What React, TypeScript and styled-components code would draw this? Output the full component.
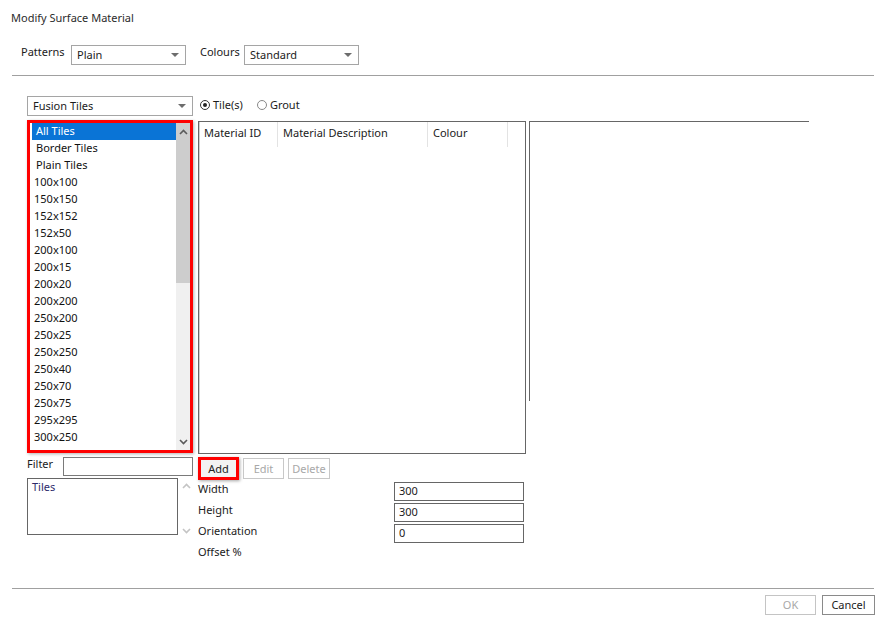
import styled, { createGlobalStyle } from 'styled-components';

const GlobalStyle = createGlobalStyle`
  html, body {
    margin: 0;
    padding: 0;
    background: #fff;
  }
  body {
    font-family: 'Noto Sans', 'Open Sans', sans-serif;
    font-size: 11px;
    color: #1b1b1b;
  }
`;

const tileSizes = [
  '100x100', '150x150', '152x152', '152x50', '200x100', '200x15', '200x20',
  '200x200', '250x200', '250x25', '250x250', '250x40', '250x70', '250x75',
  '295x295', '300x250',
];

function Combo({ value, width }: { value: string; width: number }) {
  return (
    <ComboBox $width={width}>
      <span>{value}</span>
      <ComboArrow />
    </ComboBox>
  );
}

function Chevron({ up, light }: { up?: boolean; light?: boolean }) {
  return (
    <svg width="9" height="6" viewBox="0 0 9 6">
      <polyline
        points={up ? '1,5 4.5,1.5 8,5' : '1,1 4.5,4.5 8,1'}
        fill="none"
        stroke={light ? '#c4c4c4' : '#5a5a5a'}
        strokeWidth="1.6"
      />
    </svg>
  );
}

function App() {
  return (
    <Dialog>
      <GlobalStyle />
      <Title>Modify Surface Material</Title>
      <PatternRow>
        <FieldLabel $width={50}>Patterns</FieldLabel>
        <Combo value="Plain" width={115} />
        <FieldLabel $width={44} $gap={14}>Colours</FieldLabel>
        <Combo value="Standard" width={115} />
      </PatternRow>
      <Divider />

      <Body>
        <LeftColumn>
          <Combo value="Fusion Tiles" width={166} />
          <ListFrame>
            <ListItems>
              <ListItem $selected $indent={4}>All Tiles</ListItem>
              <ListItem $indent={4}>Border Tiles</ListItem>
              <ListItem $indent={4}>Plain Tiles</ListItem>
              {tileSizes.map((s) => (
                <ListItem key={s} $indent={2}>{s}</ListItem>
              ))}
            </ListItems>
            <ScrollBar>
              <ScrollButton $active>
                <Chevron up />
              </ScrollButton>
              <ScrollTrack>
                <ScrollThumb />
              </ScrollTrack>
              <ScrollButton>
                <Chevron />
              </ScrollButton>
            </ScrollBar>
          </ListFrame>
          <FilterRow>
            <FieldLabel $width={36}>Filter</FieldLabel>
            <TextBox $width={130} $light />
          </FilterRow>
          <TilesRow>
            <TilesBox>Tiles</TilesBox>
            <MiniScroll>
              <Chevron up light />
              <Chevron light />
            </MiniScroll>
          </TilesRow>
        </LeftColumn>

        <MiddleColumn>
          <RadioRow>
            <RadioOption>
              <RadioCircle $checked />
              Tile(s)
            </RadioOption>
            <RadioOption>
              <RadioCircle />
              Grout
            </RadioOption>
          </RadioRow>
          <Table>
            <HeaderRow>
              <HeaderCell $width={80}>Material ID</HeaderCell>
              <HeaderCell $width={150}>Material Description</HeaderCell>
              <HeaderCell $width={80}>Colour</HeaderCell>
            </HeaderRow>
          </Table>
          <ButtonRow>
            <Highlight>
              <SmallButton>Add</SmallButton>
            </Highlight>
            <SmallButton $disabled $width={41}>Edit</SmallButton>
            <SmallButton $disabled $width={42}>Delete</SmallButton>
          </ButtonRow>
          <FormGrid>
            <FormLabel>Width</FormLabel>
            <TextBox $width={130}>300</TextBox>
            <FormLabel>Height</FormLabel>
            <TextBox $width={130}>300</TextBox>
            <FormLabel>Orientation</FormLabel>
            <TextBox $width={130}>0</TextBox>
            <FormLabel>Offset %</FormLabel>
          </FormGrid>
        </MiddleColumn>

        <PreviewPanel />
      </Body>

      <Footer>
        <Divider />
        <FooterButtons>
          <DialogButton $disabled $width={51}>OK</DialogButton>
          <DialogButton $width={53}>Cancel</DialogButton>
        </FooterButtons>
      </Footer>
    </Dialog>
  );
}

export default App;

const Dialog = styled.div`
  display: flex;
  flex-direction: column;
  width: 892px;
  height: 633px;
  background: #fff;
  overflow: hidden;
`;

const Title = styled.div`
  padding: 11px 0 0 11px;
  line-height: 14px;
  color: #2b2b2b;
`;

const PatternRow = styled.div`
  display: flex;
  margin-top: 20px;
  padding-left: 21px;
  height: 20px;
`;

const FieldLabel = styled.span<{ $width: number; $gap?: number }>`
  flex-shrink: 0;
  width: ${({ $width }) => $width}px;
  margin-left: ${({ $gap }) => $gap || 0}px;
  line-height: 14px;
`;

const ComboBox = styled.div<{ $width: number }>`
  position: relative;
  display: flex;
  align-items: center;
  box-sizing: border-box;
  width: ${({ $width }) => $width}px;
  height: 20px;
  padding: 0 0 2px 5px;
  border: 1px solid #a5a5a5;
  background: #fff;
`;

const ComboArrow = styled.span`
  position: absolute;
  right: 6px;
  top: 7px;
  width: 0;
  height: 0;
  border-left: 4px solid transparent;
  border-right: 4px solid transparent;
  border-top: 4px solid #6d6d6d;
`;

const Divider = styled.div`
  height: 0;
  margin: 10px 18px 0 12px;
  border-top: 1px solid #a0a0a0;
`;

const Body = styled.div`
  display: flex;
  align-items: flex-start;
  margin-top: 20px;
  padding-left: 27px;
`;

const LeftColumn = styled.div`
  display: flex;
  flex-direction: column;
  width: 166px;
`;

const ListFrame = styled.div`
  display: flex;
  box-sizing: border-box;
  width: 166px;
  height: 333px;
  margin-top: 4px;
  border: 3px solid #ff0000;
  background: #fff;
  box-shadow: 1px 1px 3px rgba(0, 0, 0, 0.3);
`;

const ListItems = styled.div`
  flex: 1;
  padding-left: 2px;
`;

const ListItem = styled.div<{ $selected?: boolean; $indent: number }>`
  height: 17px;
  line-height: 15px;
  padding-left: ${({ $indent }) => $indent}px;
  background: ${({ $selected }) => ($selected ? '#0a74d6' : 'transparent')};
  color: ${({ $selected }) => ($selected ? '#fff' : '#111')};
  white-space: nowrap;
`;

const ScrollBar = styled.div`
  display: flex;
  flex-direction: column;
  width: 14px;
  background: #f0f0f0;
`;

const ScrollButton = styled.div<{ $active?: boolean }>`
  display: flex;
  align-items: center;
  justify-content: center;
  height: 17px;
  background: ${({ $active }) => ($active ? '#cdcdcd' : '#f0f0f0')};
`;

const ScrollTrack = styled.div`
  flex: 1;
`;

const ScrollThumb = styled.div`
  height: 143px;
  background: #cdcdcd;
`;

const FilterRow = styled.div`
  display: flex;
  margin-top: 4px;
  height: 20px;
`;

const TextBox = styled.div<{ $width: number; $light?: boolean }>`
  box-sizing: border-box;
  width: ${({ $width }) => $width}px;
  height: 19px;
  padding-left: 4px;
  line-height: 16px;
  border: 1px solid ${({ $light }) => ($light ? '#7a7a7a' : '#666')};
  background: #fff;
`;

const TilesRow = styled.div`
  display: flex;
  margin-top: 1px;
`;

const TilesBox = styled.div`
  box-sizing: border-box;
  width: 151px;
  height: 57px;
  padding: 1px 4px;
  line-height: 14px;
  border: 1px solid #666;
  color: #2c2a6b;
`;

const MiniScroll = styled.div`
  display: flex;
  flex-direction: column;
  justify-content: space-between;
  align-items: center;
  width: 14px;
  height: 51px;
  margin: 5px 0 0 1px;
`;

const MiddleColumn = styled.div`
  display: flex;
  flex-direction: column;
  width: 328px;
  margin-left: 5px;
`;

const RadioRow = styled.div`
  display: flex;
  align-items: center;
  gap: 14px;
  height: 20px;
  margin-left: 2px;
`;

const RadioOption = styled.label`
  display: flex;
  align-items: center;
  gap: 3px;
  line-height: 14px;
  margin-top: -3px;
`;

const RadioCircle = styled.span<{ $checked?: boolean }>`
  position: relative;
  box-sizing: border-box;
  width: 10px;
  height: 10px;
  border-radius: 50%;
  border: 1px solid ${({ $checked }) => ($checked ? '#333' : '#888')};
  &::after {
    content: '';
    display: ${({ $checked }) => ($checked ? 'block' : 'none')};
    position: absolute;
    left: 2px;
    top: 2px;
    width: 4px;
    height: 4px;
    border-radius: 50%;
    background: #222;
  }
`;

const Table = styled.div`
  box-sizing: border-box;
  height: 333px;
  margin-top: 5px;
  border: 1px solid #666;
  box-shadow: inset 1px 0 0 #d0d0d0;
`;

const HeaderRow = styled.div`
  display: flex;
  height: 25px;
`;

const HeaderCell = styled.div<{ $width: number }>`
  box-sizing: border-box;
  width: ${({ $width }) => $width}px;
  padding: 4px 0 0 5px;
  line-height: 14px;
  border-right: 1px solid #e3e3e3;
  &:first-child {
    width: ${({ $width }) => $width - 1}px;
  }
`;

const ButtonRow = styled.div`
  display: flex;
  align-items: flex-start;
  gap: 4px;
  margin-top: 3px;
`;

const Highlight = styled.div`
  box-sizing: border-box;
  width: 41px;
  height: 23px;
  border: 3px solid #ff0000;
  box-shadow: 1px 1px 3px rgba(0, 0, 0, 0.35);
  background: #f3f3f3;
`;

const SmallButton = styled.div<{ $disabled?: boolean; $width?: number }>`
  box-sizing: border-box;
  width: ${({ $width }) => ($width ? `${$width}px` : '100%')};
  height: ${({ $width }) => ($width ? '21px' : '17px')};
  margin-top: ${({ $width }) => ($width ? '1px' : '0')};
  padding-bottom: 1px;
  display: flex;
  align-items: center;
  justify-content: center;
  border: ${({ $width }) => ($width ? '1px solid #c8c8c8' : 'none')};
  color: ${({ $disabled }) => ($disabled ? '#a8a8a8' : '#222')};
  background: ${({ $width }) => ($width ? '#fff' : 'transparent')};
`;

const FormGrid = styled.div`
  display: grid;
  grid-template-columns: 196px 130px;
  grid-auto-rows: 19px;
  row-gap: 2px;
  margin-top: 2px;
`;

const FormLabel = styled.span`
  line-height: 14px;
`;

const PreviewPanel = styled.div`
  box-sizing: border-box;
  width: 280px;
  height: 280px;
  margin: 25px 0 0 3px;
  border-top: 1px solid #666;
  border-left: 1px solid #666;
`;

const Footer = styled.div`
  margin-top: auto;
  padding-bottom: 18px;
`;

const FooterButtons = styled.div`
  display: flex;
  justify-content: flex-end;
  gap: 6px;
  margin-top: 6px;
  padding-right: 17px;
`;

const DialogButton = styled.div<{ $disabled?: boolean; $width: number }>`
  box-sizing: border-box;
  display: flex;
  align-items: center;
  justify-content: center;
  width: ${({ $width }) => $width}px;
  height: 20px;
  padding-bottom: 1px;
  border: 1px solid ${({ $disabled }) => ($disabled ? '#c4c4c4' : '#8a8a8a')};
  color: ${({ $disabled }) => ($disabled ? '#a8a8a8' : '#1b1b1b')};
  background: #fff;
`;
